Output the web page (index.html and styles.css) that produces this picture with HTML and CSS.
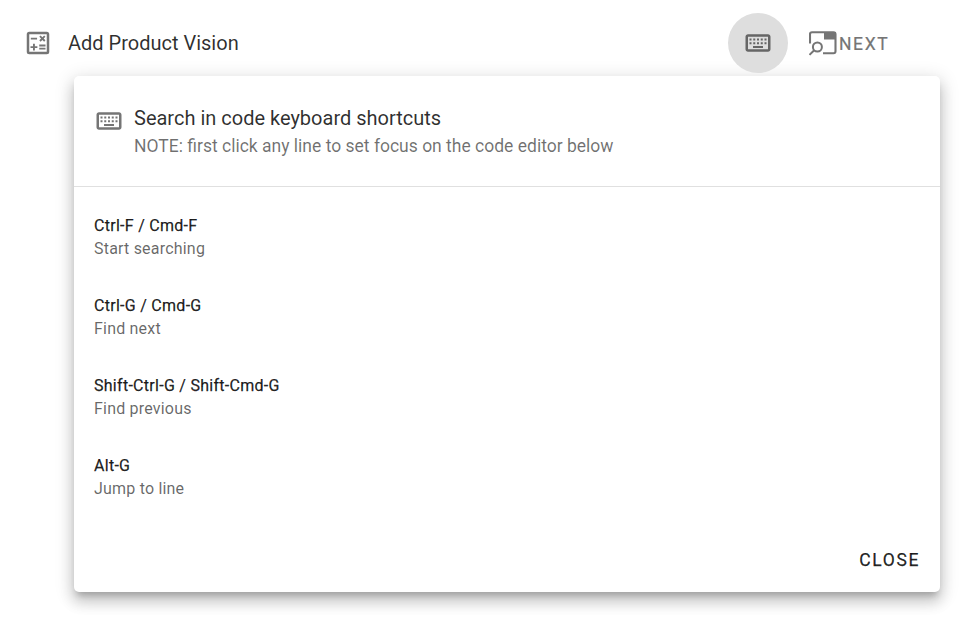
FILE: index.html
```html
<!DOCTYPE html>
<html lang="en">
<head>
<meta charset="utf-8">
<title>Add Product Vision</title>
<link rel="stylesheet" href="styles.css">
</head>
<body>
<header class="bar">
  <svg class="ico ico-calc" viewBox="0 0 24 24"><path d="M19 3H5a2 2 0 0 0-2 2v14a2 2 0 0 0 2 2h14a2 2 0 0 0 2-2V5a2 2 0 0 0-2-2zm0 16H5V5h14v14zM6.250 7.720h5v1.500h-5zM13 15.750h5v1.500h-5zM13 13.250h5v1.500h-5zM8 18h1.500v-2h2v-1.500h-2v-2H8v2H6V16h2zM14.090 10.950l1.410-1.410 1.410 1.410 1.060-1.060-1.410-1.420 1.410-1.410L16.910 6 15.500 7.410 14.090 6l-1.060 1.060 1.410 1.410-1.410 1.420z"/></svg>
  <h1 class="title">Add Product Vision</h1>
  <button class="round"><svg class="ico" viewBox="0 0 24 24"><path d="M20 7v10H4V7h16m0-2H4c-1.100 0-1.990.9-1.990 2L2 17c0 1.100.9 2 2 2h16c1.100 0 2-.9 2-2V7c0-1.100-.9-2-2-2zM11.200 8.400h1.600v1.600h-1.600zm0 3h1.600v1.600h-1.600zm-3-3h1.600v1.600H8.200zm0 3h1.600v1.600H8.200zm-3 0h1.600v1.600H5.200zm0-3h1.600v1.600H5.200zm2.800 6h8v1.600H8zm6.200-3h1.600v1.600h-1.600zm0-3h1.600v1.600h-1.600zm3 3h1.600v1.600h-1.600zm0-3h1.600v1.600h-1.600z"/></svg></button>
  <button class="next"><svg class="ico-next" viewBox="0 0 28 26"><path d="M1 12.500V3.200Q1 1.200 3 1.200H24.500Q26.500 1.200 26.500 3.200V20.200Q26.500 22.200 24.500 22.200H14" fill="none" stroke="currentColor" stroke-width="2.100"/><path d="M15 1h12v7.500H15z"/><circle cx="8.400" cy="16" r="4.500" fill="none" stroke="currentColor" stroke-width="2"/><path d="M5.200 19.200L.5 23.900" stroke="currentColor" stroke-width="2"/></svg><span>NEXT</span></button>
</header>
<main class="card">
  <section class="head">
    <svg class="ico" viewBox="0 0 24 24"><path d="M20 7v10H4V7h16m0-2H4c-1.100 0-1.990.9-1.990 2L2 17c0 1.100.9 2 2 2h16c1.100 0 2-.9 2-2V7c0-1.100-.9-2-2-2zM11.200 8.400h1.600v1.600h-1.600zm0 3h1.600v1.600h-1.600zm-3-3h1.600v1.600H8.200zm0 3h1.600v1.600H8.200zm-3 0h1.600v1.600H5.200zm0-3h1.600v1.600H5.200zm2.800 6h8v1.600H8zm6.200-3h1.600v1.600h-1.600zm0-3h1.600v1.600h-1.600zm3 3h1.600v1.600h-1.600zm0-3h1.600v1.600h-1.600z"/></svg>
    <div><h2>Search in code keyboard shortcuts</h2><p>NOTE: first click any line to set focus on the code editor below</p></div>
  </section>
  <dl class="keys">
    <div><dt>Ctrl-F / Cmd-F</dt><dd>Start searching</dd></div>
    <div><dt>Ctrl-G / Cmd-G</dt><dd>Find next</dd></div>
    <div><dt>Shift-Ctrl-G / Shift-Cmd-G</dt><dd>Find previous</dd></div>
    <div><dt>Alt-G</dt><dd>Jump to line</dd></div>
  </dl>
  <footer><button class="close">CLOSE</button></footer>
</main>
</body>
</html>
```
FILE: styles.css
```css
* { box-sizing: border-box; }
body { margin: 0; min-height: 100vh; background: #fff; color: rgba(0,0,0,.82); font-family: Roboto, sans-serif; }
h1, h2, p, dl, dt, dd { margin: 0; font-weight: 400; }
button { border: 0; padding: 0; background: none; font: inherit; color: #757575; }
.bar { height: 76px; padding: 13px 0 0 23px; display: flex; }
.ico { width: 30px; height: 30px; fill: #757575; flex: none; display: block; }
.ico-calc { margin-top: 15px; }
.title { font-size: 20px; line-height: 60px; margin-left: 15px; width: 660px; }
.round { width: 60px; height: 60px; border-radius: 50%; background: #dedede; display: grid; place-items: center; flex: none; }
.round .ico { fill: #666; }
.next { display: flex; align-items: center; height: 60px; margin-left: 21px; font-size: 17.500px; letter-spacing: 1.600px; -webkit-text-stroke: .2px currentColor; }
.next span { margin-left: 2px; padding-top: 2px; }
.ico-next { width: 28px; height: 26px; margin-top: 2px; fill: currentColor; }
.card { margin-left: 74px; width: 866px; height: 516px; border-radius: 5px; background: #fff; display: flex; flex-direction: column;
  box-shadow: 0 6px 6px -3px rgba(0,0,0,.2), 0 10px 14px 1px rgba(0,0,0,.14), 0 4px 18px 3px rgba(0,0,0,.12); }
.head { flex: none; height: 111px; padding: 29px 20px 0; display: flex; gap: 10px; border-bottom: 1px solid #e0e0e0; }
.head .ico { margin-top: .5px; }
.head h2 { font-size: 20px; line-height: 26px; }
.head p { font-size: 17.500px; line-height: 30px; color: rgba(0,0,0,.56); }
.keys { padding-top: 27px; flex: none; height: 341px; font-size: 16px; }
.keys > div { height: 80px; padding-left: 20px; line-height: 23px; }
.keys dt { letter-spacing: .28px; color: rgba(0,0,0,.87); -webkit-text-stroke: .25px currentColor; }
.keys dd { color: rgba(0,0,0,.6); letter-spacing: .2px; }
.card footer { height: 64px; display: flex; justify-content: flex-end; padding-right: 20px; }
.close { height: 64px; color: rgba(0,0,0,.87); font-size: 17.500px; letter-spacing: 1.600px; -webkit-text-stroke: .25px currentColor; }
```
